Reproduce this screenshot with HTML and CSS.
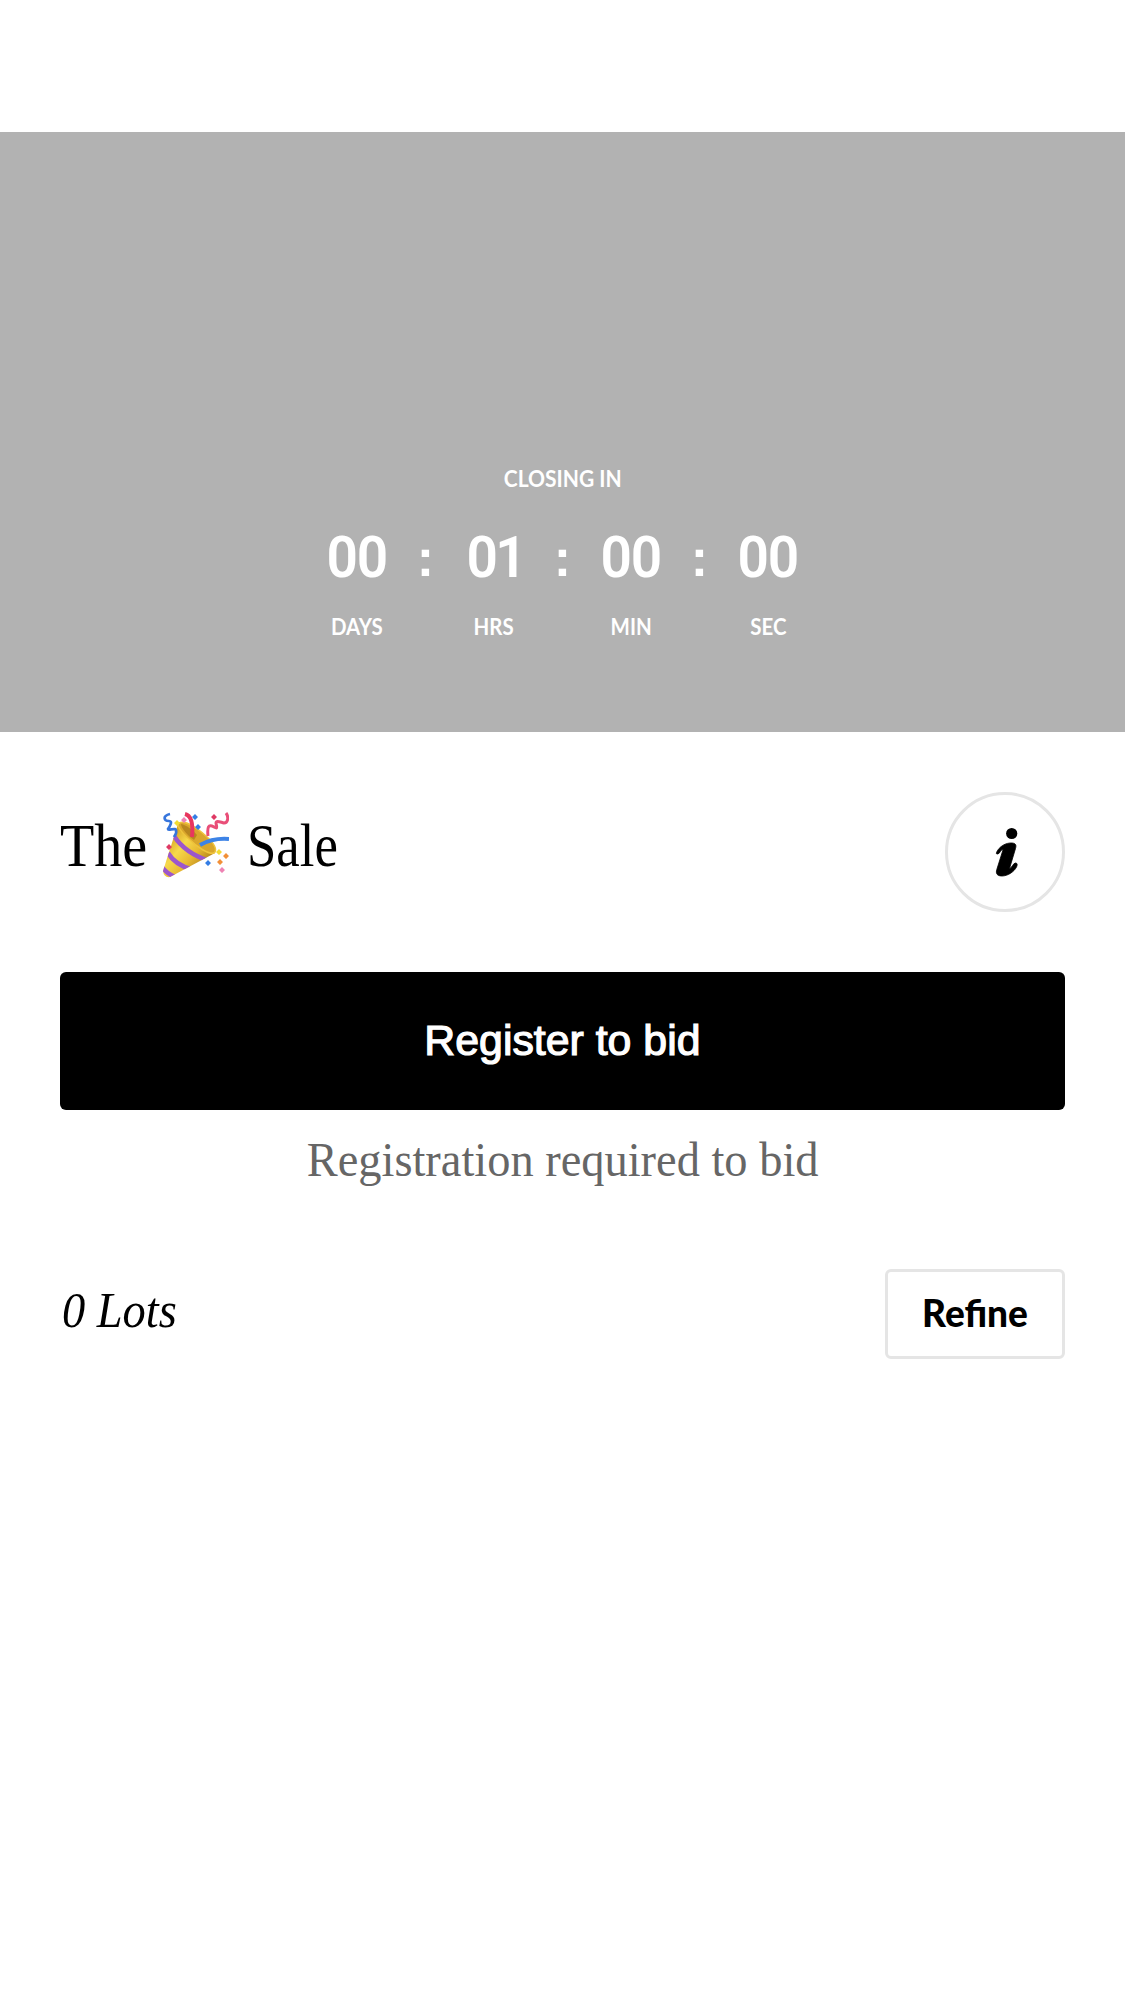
FILE: index.html
```html
<!DOCTYPE html>
<html lang="en">
<head>
<meta charset="utf-8">
<title>The 🎉 Sale</title>
<link rel="stylesheet" href="styles.css">
</head>
<body>
<main class="page">
  <section class="hero">
    <div class="closing"><span>CLOSING IN</span></div>
    <div class="timer">
      <div class="unit"><div class="num"><span>00</span></div><div class="label"><span>DAYS</span></div></div>
      <div class="colon">:</div>
      <div class="unit"><div class="num one"><span>01</span></div><div class="label"><span>HRS</span></div></div>
      <div class="colon">:</div>
      <div class="unit"><div class="num"><span>00</span></div><div class="label"><span>MIN</span></div></div>
      <div class="colon">:</div>
      <div class="unit"><div class="num"><span>00</span></div><div class="label"><span>SEC</span></div></div>
    </div>
  </section>
  <section class="content">
    <header class="heading">
      <h1 class="title">
        <span class="word the">The</span>
        <svg class="popper" viewBox="0 0 66 66" role="img" aria-label="Party popper">
          <defs>
            <linearGradient id="gold" x1="0.1" y1="0.3" x2="0.8" y2="0.9">
              <stop offset="0" stop-color="#d9a526"/><stop offset=".3" stop-color="#f6d94c"/><stop offset=".6" stop-color="#e8b932"/><stop offset="1" stop-color="#a87816"/>
            </linearGradient>
            <clipPath id="cone"><path d="M15 12 L52 41 L7 65 Q1 66 0 59 Z"/></clipPath>
          </defs>
          <path d="M15 12 L52 41 L7 65 Q1 66 0 59 Z" fill="url(#gold)"/>
          <g clip-path="url(#cone)" fill="none" stroke="#9c56cc" stroke-width="4.5">
            <path d="M11 24 Q22 41 46 49"/><path d="M5 41 Q12 53 30 58"/><path d="M-1 55 Q3 61 12 65"/>
          </g>
          <path d="M16 11 C22 8 34 16 43 24 C51 31 55 38 51 41 C46 43 34 35 26 27 C18 20 13 13 16 11Z" fill="#d9a62c" stroke="#efc43c" stroke-width="1.5"/>
          <path d="M18 12 C23 13 30 18 34 23 L31 28 C25 24 18 16 18 12Z" fill="#b8861f"/>
          <g fill="none" stroke-width="4">
            <path d="M22 2 C30 4 30 15 29 25" stroke="#e8365e"/>
            <path d="M37 33 C46 28 54 26 66 27" stroke="#3d83e6"/>
            <path d="M7 2 C-1 4 1 9 6 9 C10 9 7 14 5 17 C5 19 14 15 13 19 C14 21 12 23 11 25" stroke="#3675dc" stroke-width="2.7"/>
            <path d="M45 24 C44 14 46 13 49 14 C55 17 54 17 53 11 C53 8 57 10 61 11 C65 11 66 5 63 1" stroke="#e94e78" stroke-width="3"/>
          </g>
          <g fill="#347de4"><path d="M32 2l3 3-3 3-3-3zM35 12l3 3-3 3-3-3zM45 48l3 3-3 3-3-3z"/></g>
          <g fill="#f2dc34"><path d="M14 8l3 3-3 3-3-3zM56 37l3 3-3 3-3-3z"/></g>
          <g fill="#f29038"><path d="M63 41l3 3-3 3-3-3zM57 47l3 3-3 3-3-3z"/></g>
          <g fill="#ee83b4"><path d="M21 5l3 3-3 3-3-3zM59 55l3 3-3 3-3-3z"/></g>
          <g fill="#df3964"><path d="M51 2l3 3-3 3-3-3zM6 32l3 3-3 3-3-3z"/></g>
        </svg>
        <span class="word sale">Sale</span>
      </h1>
      <button class="info" aria-label="Information">
        <svg viewBox="0 0 120 120" width="120" height="120">
          <circle cx="66.7" cy="41.5" r="5.6"/>
          <path d="M51.5 60.5 C54 54.5 61 50.5 67 51 C70.8 51.3 71.5 53 70.5 56.5 L64.5 76.5 C67 76 68 71.2 70.5 71 C72.5 71 72.5 73 71.5 75 C69 80 62.5 84 57 84 C52 84 50.6 81.5 51.8 77.5 L58.2 57.2 C55.5 57.5 55 61.8 52.7 62 C51.3 62 51 61.3 51.5 60.5Z" stroke="#000" stroke-width=".8"/>
        </svg>
      </button>
    </header>
    <button class="register"><span>Register to bid</span></button>
    <p class="note"><span>Registration required to bid</span></p>
    <div class="filter">
      <p class="lots"><span>0 Lots</span></p>
      <button class="refine"><span>Refine</span></button>
    </div>
  </section>
</main>
</body>
</html>
```
FILE: styles.css
```css
* { box-sizing: border-box; }
body, h1, p { margin: 0; font-weight: 400; }
body { background: #fff; color: #000; }
button { padding: 0; border: 0; background: none; color: inherit; }
span { display: inline-block; white-space: nowrap; }
.page { min-height: 2001px; padding-top: 132px; }

.hero { height: 600px; padding-top: 331px; background: #b2b2b2; color: #fff; text-align: center; }
.closing, .label { font: 700 22px/32px Lato, sans-serif; }
.closing span { transform: scaleX(.955); }
.label span { transform: scaleX(.93); }
.timer { display: flex; justify-content: center; margin-top: 27px; }
.unit { width: 77px; }
.colon { width: 60px; padding-top: 1px; font: 700 52px/70px "Liberation Sans", sans-serif; }
.num { font: 600 58px/70px Roboto, sans-serif; }
.num span { letter-spacing: -1.5px; transform: scaleX(.95); }
.one { padding-left: 3px; }
.one span { letter-spacing: -3px; }
.label { margin-top: 19px; }

.content { padding: 60px 60px 0; }
.heading { display: flex; justify-content: space-between; height: 120px; }
.title { display: flex; align-items: flex-start; font: 400 61px/108px "Liberation Serif", serif; }
.word { transform-origin: left; }
.the { width: 103px; transform: scaleX(.92); }
.sale { margin-left: 18px; transform: scaleX(.865); }
.popper { width: 66px; height: 66px; margin-top: 20px; }
.info { width: 120px; height: 120px; border: 3px solid #e5e5e5; border-radius: 50%; }
.info svg { display: block; margin: -3px; }

.register { display: block; width: 100%; height: 138px; margin-top: 60px; border-radius: 6px; background: #000; color: #fff; font: 400 42px/138px "Liberation Sans", sans-serif; }
.register span { transform: scaleX(1.02); -webkit-text-stroke: 1.2px #fff; }
.note { margin-top: 20px; color: #666; font: 400 48px/60px "Liberation Serif", serif; text-align: center; }
.note span { transform: scaleX(.967); }
.filter { display: flex; justify-content: space-between; margin-top: 79px; }
.lots { padding-left: 2px; font: italic 400 51px/82px "Liberation Serif", serif; }
.lots span { transform: scaleX(.91); transform-origin: left; }
.refine { width: 180px; height: 90px; border: 3px solid #e5e5e5; border-radius: 6px; font: 900 37px/82px Lato, sans-serif; }
.refine span { display: block; height: 84px; }
```
